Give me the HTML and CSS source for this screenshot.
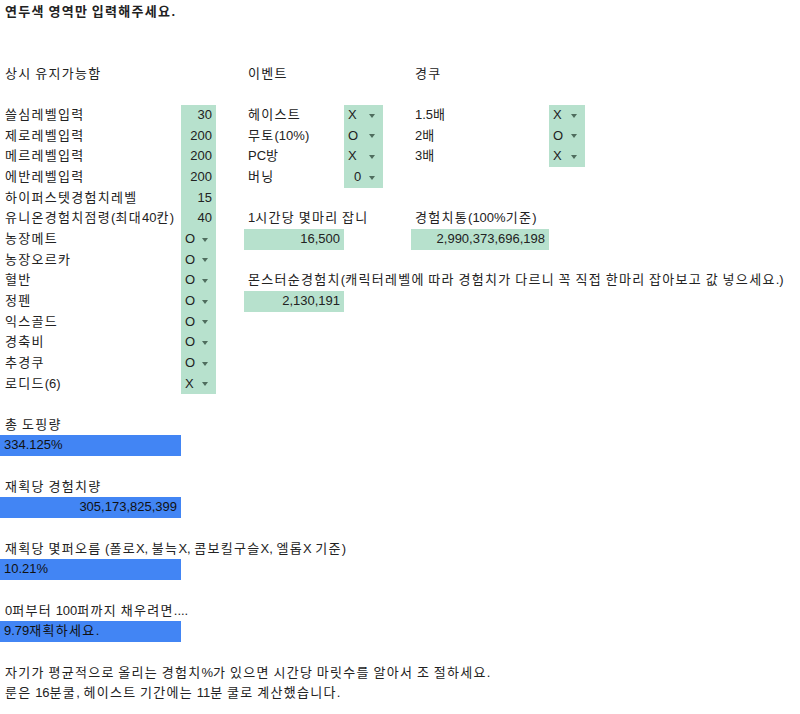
FILE: index.html
```html
<!DOCTYPE html>
<html lang="ko">
<head>
<meta charset="utf-8">
<title>경험치 계산기</title>
<link rel="stylesheet" href="styles.css">
</head>
<body>
<div class="sheet">
  <div class="c a r0 bold"><span class="k">연두색</span> <span class="k">영역만</span> <span class="k">입력해주세요</span>.</div>

  <div class="c a r3"><span class="k">상시</span> <span class="k">유지가능함</span></div>
  <div class="c cc r3"><span class="k">이벤트</span></div>
  <div class="c f r3"><span class="k">경쿠</span></div>

  <div class="c a r5"><span class="k">쓸심레벨입력</span></div>
  <div class="c b r5 in num">30</div>
  <div class="c cc r5"><span class="k">헤이스트</span></div>
  <div class="c d r5 in dd"><span>X</span><i class="arr"></i></div>
  <div class="c f r5">1.5<span class="k">배</span></div>
  <div class="c g r5 in dd"><span>X</span><i class="arr"></i></div>

  <div class="c a r6"><span class="k">제로레벨입력</span></div>
  <div class="c b r6 in num">200</div>
  <div class="c cc r6"><span class="k">무토</span>(10%)</div>
  <div class="c d r6 in dd"><span>O</span><i class="arr"></i></div>
  <div class="c f r6">2<span class="k">배</span></div>
  <div class="c g r6 in dd"><span>O</span><i class="arr"></i></div>

  <div class="c a r7"><span class="k">메르레벨입력</span></div>
  <div class="c b r7 in num">200</div>
  <div class="c cc r7">PC<span class="k">방</span></div>
  <div class="c d r7 in dd"><span>X</span><i class="arr"></i></div>
  <div class="c f r7">3<span class="k">배</span></div>
  <div class="c g r7 in dd"><span>X</span><i class="arr"></i></div>

  <div class="c a r8"><span class="k">에반레벨입력</span></div>
  <div class="c b r8 in num">200</div>
  <div class="c cc r8"><span class="k">버닝</span></div>
  <div class="c d r8 in dd"><span class="n">0</span><i class="arr"></i></div>

  <div class="c a r9"><span class="k">하이퍼스텟경험치레벨</span></div>
  <div class="c b r9 in num">15</div>

  <div class="c a r10"><span class="k">유니온경험치점령</span>(<span class="k">최대</span>40<span class="k">칸</span>)</div>
  <div class="c b r10 in num">40</div>
  <div class="c cc r10 wide">1<span class="k">시간당</span> <span class="k">몇마리</span> <span class="k">잡니</span></div>
  <div class="c f r10 wide"><span class="k">경험치통</span>(100%<span class="k">기준</span>)</div>

  <div class="c a r11"><span class="k">농장메트</span></div>
  <div class="c b r11 in dd"><span>O</span><i class="arr"></i></div>
  <div class="c cc r11 in num">16,500</div>
  <div class="c f r11 in num">2,990,373,696,198</div>

  <div class="c a r12"><span class="k">농장오르카</span></div>
  <div class="c b r12 in dd"><span>O</span><i class="arr"></i></div>

  <div class="c a r13"><span class="k">혈반</span></div>
  <div class="c b r13 in dd"><span>O</span><i class="arr"></i></div>
  <div class="c cc r13 wide"><span class="k">몬스터순경험치</span>(<span class="k">캐릭터레벨에</span> <span class="k">따라</span> <span class="k">경험치가</span> <span class="k">다르니</span> <span class="k">꼭</span> <span class="k">직접</span> <span class="k">한마리</span> <span class="k">잡아보고</span> <span class="k">값</span> <span class="k">넣으세요</span>.)</div>

  <div class="c a r14"><span class="k">정펜</span></div>
  <div class="c b r14 in dd"><span>O</span><i class="arr"></i></div>
  <div class="c cc r14 in num">2,130,191</div>

  <div class="c a r15"><span class="k">익스골드</span></div>
  <div class="c b r15 in dd"><span>O</span><i class="arr"></i></div>

  <div class="c a r16"><span class="k">경축비</span></div>
  <div class="c b r16 in dd"><span>O</span><i class="arr"></i></div>

  <div class="c a r17"><span class="k">추경쿠</span></div>
  <div class="c b r17 in dd"><span>O</span><i class="arr"></i></div>

  <div class="c a r18"><span class="k">로디드</span>(6)</div>
  <div class="c b r18 in dd"><span>X</span><i class="arr"></i></div>

  <div class="c a r20"><span class="k">총</span> <span class="k">도핑량</span></div>
  <div class="c a r21 out">334.125%</div>

  <div class="c a r23"><span class="k">재획당</span> <span class="k">경험치량</span></div>
  <div class="c a r24 out num">305,173,825,399</div>

  <div class="c a r26 wide"><span class="k">재획당</span> <span class="k">몇퍼오름</span> (<span class="k">폴로</span>X, <span class="k">불늑</span>X, <span class="k">콤보킬구슬</span>X, <span class="k">엘롭</span>X <span class="k">기준</span>)</div>
  <div class="c a r27 out">10.21%</div>

  <div class="c a r29 wide">0<span class="k">퍼부터</span> 100<span class="k">퍼까지</span> <span class="k">채우려면</span>....</div>
  <div class="c a r30 out">9.79<span class="k">재획하세요</span>.</div>

  <div class="c a r32 wide"><span class="k">자기가</span> <span class="k">평균적으로</span> <span class="k">올리는</span> <span class="k">경험치</span>%<span class="k">가</span> <span class="k">있으면</span> <span class="k">시간당</span> <span class="k">마릿수를</span> <span class="k">알아서</span> <span class="k">조</span> <span class="k">절하세요</span>.</div>
  <div class="c a r33 wide"><span class="k">룬은</span> 16<span class="k">분쿨</span>, <span class="k">헤이스트</span> <span class="k">기간에는</span> 11<span class="k">분</span> <span class="k">쿨로</span> <span class="k">계산했습니다</span>.</div>
</div>
</body>
</html>
```

FILE: styles.css
```css
html, body {
  margin: 0;
  padding: 0;
  background: #ffffff;
}

body {
  font-family: "Liberation Sans", Arial, "Noto Sans CJK KR", sans-serif;
  font-size: 13px;
  color: #222222;
}

.sheet {
  display: grid;
  grid-template-columns: 181px 35px 28px 100px 39px 28px 138px 36px 1fr;
  grid-template-rows: repeat(35, 20.67px);
  padding-top: 1.7px;
  width: 800px;
  overflow: hidden;
}

.c {
  box-sizing: border-box;
  padding: 0 4px 0 5px;
  line-height: 20.67px;
  white-space: nowrap;
  min-width: 0;
}

.k {
  letter-spacing: 1.3px;
}

.wide {
  overflow: visible;
}

.bold {
  font-weight: bold;
}

.a  { grid-column: 1; }
.b  { grid-column: 2; }
.cc { grid-column: 4; padding-left: 4px; }
.d  { grid-column: 5; }
.f  { grid-column: 7; padding-left: 4px; }
.g  { grid-column: 8; }

.r0  { grid-row: 1; }
.r3  { grid-row: 4; }
.r5  { grid-row: 6; }
.r6  { grid-row: 7; }
.r7  { grid-row: 8; }
.r8  { grid-row: 9; }
.r9  { grid-row: 10; }
.r10 { grid-row: 11; }
.r11 { grid-row: 12; }
.r12 { grid-row: 13; }
.r13 { grid-row: 14; }
.r14 { grid-row: 15; }
.r15 { grid-row: 16; }
.r16 { grid-row: 17; }
.r17 { grid-row: 18; }
.r18 { grid-row: 19; }
.r20 { grid-row: 21; }
.r21 { grid-row: 22; }
.r23 { grid-row: 24; }
.r24 { grid-row: 25; }
.r26 { grid-row: 27; }
.r27 { grid-row: 28; }
.r29 { grid-row: 30; }
.r30 { grid-row: 31; }
.r32 { grid-row: 33; }
.r33 { grid-row: 34; }

.in {
  background: #b7e1cd;
}

.out {
  background: #4285f4;
  color: #111111;
  padding-left: 4px;
}

.num {
  text-align: right;
  padding-right: 4px;
}

.dd {
  display: flex;
  align-items: center;
  justify-content: space-between;
  padding: 0 8px 0 4px;
}

.dd .n {
  padding-left: 6px;
}

.arr {
  display: block;
  width: 0;
  height: 0;
  border-left: 3.5px solid transparent;
  border-right: 3.5px solid transparent;
  border-top: 4px solid #4f6d5e;
  margin-top: 1px;
}
```
